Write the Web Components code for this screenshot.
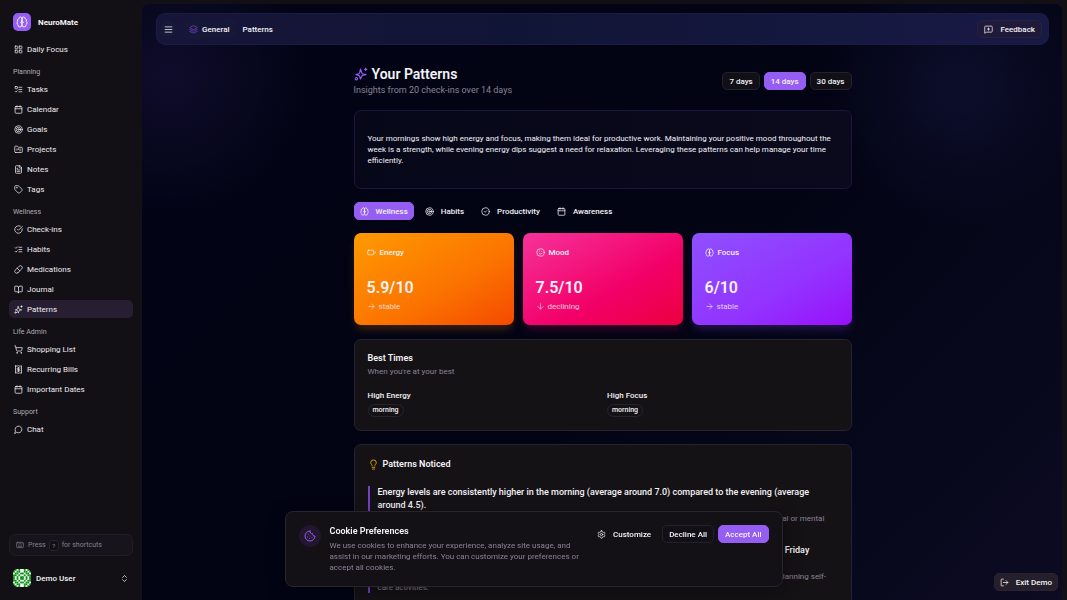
<!DOCTYPE html>
<html lang="en">
<head>
<meta charset="utf-8">
<title>NeuroMate – Your Patterns</title>
<style>
html,body{margin:0;height:100%;background:#121014}
body{font-family:Roboto,"Liberation Sans",sans-serif;font-size:8px;line-height:11px;color:#f4f2f7;--accent:#965df3;--muted:#8a8296;--line:#27222e;--card:#151216}
</style>
</head>
<body>
<nm-app></nm-app>
<script>
const ICONS = {
  grid:'<rect width="7" height="7" x="3" y="3" rx="1"/><rect width="7" height="7" x="14" y="3" rx="1"/><rect width="7" height="7" x="14" y="14" rx="1"/><rect width="7" height="7" x="3" y="14" rx="1"/>',
  todo:'<rect x="3" y="4" width="6" height="6" rx="1"/><path d="m3 17 2 2 4-4M13 6h8M13 12h8M13 18h8"/>',
  calendar:'<path d="M8 2v4M16 2v4"/><rect width="18" height="18" x="3" y="4" rx="2"/><path d="M3 10h18"/>',
  target:'<circle cx="12" cy="12" r="10"/><circle cx="12" cy="12" r="6"/><circle cx="12" cy="12" r="2"/>',
  folder:'<path d="M4 20h16a2 2 0 0 0 2-2V8a2 2 0 0 0-2-2h-7.93a2 2 0 0 1-1.66-.9l-.82-1.2A2 2 0 0 0 7.93 3H4a2 2 0 0 0-2 2v13c0 1.1.9 2 2 2ZM8 10v4M12 10v2M16 10v6"/>',
  file:'<path d="M15 2H6a2 2 0 0 0-2 2v16a2 2 0 0 0 2 2h12a2 2 0 0 0 2-2V7Z"/><path d="M14 2v4a2 2 0 0 0 2 2h4M10 9H8M16 13H8M16 17H8"/>',
  tag:'<path d="M12.586 2.586A2 2 0 0 0 11.172 2H4a2 2 0 0 0-2 2v7.172a2 2 0 0 0 .586 1.414l8.704 8.704a2.426 2.426 0 0 0 3.42 0l6.58-6.58a2.426 2.426 0 0 0 0-3.42z"/><circle cx="7.5" cy="7.5" r=".5" fill="currentColor"/>',
  check:'<path d="M21.801 10A10 10 0 1 1 17 3.335"/><path d="m9 11 3 3L22 4"/>',
  circlecheck:'<circle cx="12" cy="12" r="10"/><path d="m9 12 2 2 4-4"/>',
  list:'<path d="m3 17 2 2 4-4M3 7l2 2 4-4M13 6h8M13 12h8M13 18h8"/>',
  pill:'<path d="m10.5 20.5 10-10a4.95 4.95 0 1 0-7-7l-10 10a4.95 4.95 0 1 0 7 7ZM8.5 8.5l7 7"/>',
  book:'<path d="M12 7v14M3 18a1 1 0 0 1-1-1V4a1 1 0 0 1 1-1h5a4 4 0 0 1 4 4 4 4 0 0 1 4-4h5a1 1 0 0 1 1 1v13a1 1 0 0 1-1 1h-6a3 3 0 0 0-3 3 3 3 0 0 0-3-3z"/>',
  sparkles:'<path d="M11 20.500 9.600 15.800A2 2 0 0 0 8.200 14.400L3.500 13l4.700-1.400A2 2 0 0 0 9.600 10.200L11 3.500l2.400 6.700a2 2 0 0 0 1.400 1.400L20.500 13l-5.700 1.400a2 2 0 0 0-1.400 1.400zM20 2v4M22 4h-4"/><circle cx="4" cy="20" r="2"/>',
  cart:'<circle cx="8" cy="21" r="1"/><circle cx="19" cy="21" r="1"/><path d="M2.05 2.05h2l2.66 12.42a2 2 0 0 0 2 1.58h9.78a2 2 0 0 0 1.95-1.57l1.65-7.43H5.12"/>',
  receipt:'<path d="M4 2v20l2-1 2 1 2-1 2 1 2-1 2 1 2-1 2 1V2l-2 1-2-1-2 1-2-1-2 1-2-1-2 1Z"/><path d="M16 8h-6a2 2 0 1 0 0 4h4a2 2 0 1 1 0 4H8M12 17.5v-11"/>',
  chat:'<path d="M7.9 20A9 9 0 1 0 4 16.1L2 22Z"/>',
  keyboard:'<rect width="20" height="16" x="2" y="4" rx="2"/><path d="M6 8h.01M10 8h.01M14 8h.01M18 8h.01M8 12h.01M12 12h.01M16 12h.01M7 16h10"/>',
  updown:'<path d="m7 15 5 5 5-5M7 9l5-5 5 5"/>',
  menu:'<path d="M3 5h18M3 12h18M3 19h18"/>',
  layers:'<path d="M12.83 2.18a2 2 0 0 0-1.66 0L2.6 6.08a1 1 0 0 0 0 1.83l8.58 3.91a2 2 0 0 0 1.66 0l8.58-3.9a1 1 0 0 0 0-1.83zM2 12l9.17 4.18a2 2 0 0 0 1.66 0L22 12M2 17l9.17 4.18a2 2 0 0 0 1.66 0L22 17"/>',
  feedback:'<path d="M22 17a2 2 0 0 1-2 2H7l-5 3V5a2 2 0 0 1 2-2h16a2 2 0 0 1 2 2zM12 8v6M9 11h6"/>',
  brain:'<path d="M12 5a3 3 0 1 0-5.997.125 4 4 0 0 0-2.526 5.77 4 4 0 0 0 .556 6.588A4 4 0 1 0 12 18ZM12 5a3 3 0 1 1 5.997.125 4 4 0 0 1 2.526 5.77 4 4 0 0 1-.556 6.588A4 4 0 1 1 12 18ZM9 13a4.5 4.5 0 0 0 3-4 4.5 4.5 0 0 0 3 4"/>',
  battery:'<path d="M22 11v2"/><rect width="16" height="12" x="2" y="6" rx="2"/>',
  smile:'<circle cx="12" cy="12" r="10"/><path d="M8 14s1.500 2 4 2 4-2 4-2M9 9h.01M15 9h.01"/>',
  right:'<path d="M5 12h14M12 5l7 7-7 7"/>',
  down:'<path d="M12 5v14M19 12l-7 7-7-7"/>',
  bulb:'<path d="M15 14c.2-1 .7-1.700 1.500-2.500 1-.9 1.500-2.200 1.500-3.500A6 6 0 0 0 6 8c0 1 .2 2.200 1.500 3.500.7.7 1.300 1.500 1.500 2.500M9 18h6M10 22h4"/>',
  cookie:'<path d="M12 2a10 10 0 1 0 10 10 4 4 0 0 1-5-5 4 4 0 0 1-5-5M8.500 8.500v.01M16 15.500v.01M12 12v.01M11 17v.01M7 14v.01"/>',
  settings:'<path d="M12.220 2h-.440a2 2 0 0 0-2 2v.180a2 2 0 0 1-1 1.730l-.430.250a2 2 0 0 1-2 0l-.150-.080a2 2 0 0 0-2.730.730l-.220.380a2 2 0 0 0 .730 2.730l.150.100a2 2 0 0 1 1 1.720v.510a2 2 0 0 1-1 1.740l-.150.090a2 2 0 0 0-.730 2.730l.220.380a2 2 0 0 0 2.730.730l.150-.080a2 2 0 0 1 2 0l.430.250a2 2 0 0 1 1 1.730V20a2 2 0 0 0 2 2h.440a2 2 0 0 0 2-2v-.180a2 2 0 0 1 1-1.730l.430-.250a2 2 0 0 1 2 0l.150.080a2 2 0 0 0 2.730-.730l.220-.390a2 2 0 0 0-.730-2.730l-.150-.080a2 2 0 0 1-1-1.740v-.500a2 2 0 0 1 1-1.740l.150-.090a2 2 0 0 0 .730-2.730l-.220-.380a2 2 0 0 0-2.730-.730l-.150.080a2 2 0 0 1-2 0l-.430-.250a2 2 0 0 1-1-1.730V4a2 2 0 0 0-2-2z"/><circle cx="12" cy="12" r="3"/>',
  logout:'<path d="M9 21H5a2 2 0 0 1-2-2V5a2 2 0 0 1 2-2h4M16 17l5-5-5-5M21 12H9"/>'
};
const define = (name, markup, setup) => customElements.define(name, class extends HTMLElement {
  constructor(){
    super();
    const t = document.createElement('template');
    t.innerHTML = '<style>*{box-sizing:border-box}h1,h2,h3,p{margin:0}button,a{font:inherit;color:inherit;text-decoration:none}button{margin:0;cursor:pointer}:host{display:block;box-sizing:border-box}</style>' + markup;
    this.attachShadow({mode:'open'}).append(t.content.cloneNode(true));
  }
  connectedCallback(){ if (setup) setup(this, this.shadowRoot); }
});

define('nm-icon', `<style>:host{display:block;flex:none;width:9px;height:9px}svg{display:block;width:100%;height:100%}</style><svg viewBox="0 0 24 24" fill="none" stroke="currentColor" stroke-width="2" stroke-linecap="round" stroke-linejoin="round" aria-hidden="true"></svg>`,
  (el, r) => { r.querySelector('svg').innerHTML = ICONS[el.getAttribute('name')]; });

define('nm-button', `<style>
:host{display:block;flex:none}
button{display:flex;align-items:center;justify-content:center;gap:7px;width:100%;height:18px;padding:0 var(--pad,5px);border:1px solid transparent;border-radius:5px;background:none;font-weight:500;white-space:nowrap}
:host([kind=outline]) button{background:#121017;border-color:#25202b}
:host([kind=primary]) button{background:var(--accent);border-color:var(--accent)}
:host([kind=soft]) button{background:#251f2c;border-color:#2a2432}
:host([kind=glass]) button{background:#1f1a3a;border-color:#262142}
</style><button type="button"><slot name="icon"></slot><slot></slot></button>`);

define('nm-nav-item', `<style>
a{display:flex;align-items:center;gap:4px;height:18px;padding:0 5px;border-radius:5px;color:#eeebf2}
:host([active]) a{background:#271f31}
</style><a href="#"><nm-icon></nm-icon><slot></slot></a>`,
  (el, r) => { const i = r.querySelector('nm-icon'); const n = document.createElement('nm-icon'); n.setAttribute('name', el.getAttribute('icon')); i.replaceWith(n);
    if (el.hasAttribute('active')) r.querySelector('a').setAttribute('aria-current','page'); });

define('nm-nav-group', `<style>
:host{display:flex;flex-direction:column;gap:2px;padding-top:4px}
h2{height:16px;line-height:20px;padding-left:4px;font-size:7px;font-weight:400;color:#b1adb6}
:host(:not([label])) h2{display:none}
</style><h2></h2><slot></slot>`, (el, r) => { r.querySelector('h2').textContent = el.getAttribute('label') || ''; });

define('nm-avatar', `<style>:host{flex:none;width:18px;height:18px}svg{display:block;border-radius:5px}</style>
<svg width="18" height="18" viewBox="0 0 20 20" role="img" aria-label="Avatar"><rect width="20" height="20" fill="#f4fff4"/><g></g></svg>`,
  (el, r) => {
    const rows = ['11010','10110','01101','11010','10101','10101','11010','01101','10110','11010'];
    let s = '';
    rows.forEach((row, y) => (row + [...row].reverse().join('')).split('').forEach((c, x) => {
      if (c === '1') s += `<rect x="${x * 2}" y="${y * 2}" width="2" height="2"/>`;
    }));
    const g = r.querySelector('g'); g.setAttribute('fill', '#0d8f18'); g.innerHTML = s;
  });

define('nm-sidebar', `<style>
:host{display:flex;flex-direction:column;width:142px;flex:none;padding:13px 9px;background:#121014}
.brand{display:flex;align-items:center;gap:7px;padding-left:4px;font-weight:700;height:18px}
.logo{display:grid;place-items:center;width:18px;height:18px;border-radius:5px;background:var(--accent)}
.logo nm-icon{width:12px;height:12px}
nav{padding-top:5px;flex:1}
.keys{display:flex;align-items:center;height:22px;padding:0 6px;gap:4px;border:1px solid #211d27;border-radius:6px;background:#17141b;color:#858091;font-size:7px}
.keys span{display:flex;align-items:center;gap:3px}
kbd{display:grid;place-items:center;width:10px;height:11px;border:1px solid #27222e;border-radius:3px;background:#121014;font:500 6px Roboto,sans-serif}
.keys nm-icon{width:8px;height:8px}
.user{display:flex;align-items:center;gap:5px;width:100%;height:18px;margin-top:13px;padding:0 4px;border:0;background:none;text-align:left;font-weight:500}
.user span{flex:1}
</style>
<div class="brand"><span class="logo"><nm-icon name="brain"></nm-icon></span>NeuroMate</div>
<nav>
<nm-nav-group><nm-nav-item icon="grid">Daily Focus</nm-nav-item></nm-nav-group>
<nm-nav-group label="Planning"><nm-nav-item icon="todo">Tasks</nm-nav-item><nm-nav-item icon="calendar">Calendar</nm-nav-item><nm-nav-item icon="target">Goals</nm-nav-item><nm-nav-item icon="folder">Projects</nm-nav-item><nm-nav-item icon="file">Notes</nm-nav-item><nm-nav-item icon="tag">Tags</nm-nav-item></nm-nav-group>
<nm-nav-group label="Wellness"><nm-nav-item icon="check">Check-ins</nm-nav-item><nm-nav-item icon="list">Habits</nm-nav-item><nm-nav-item icon="pill">Medications</nm-nav-item><nm-nav-item icon="book">Journal</nm-nav-item><nm-nav-item icon="sparkles" active>Patterns</nm-nav-item></nm-nav-group>
<nm-nav-group label="Life Admin"><nm-nav-item icon="cart">Shopping List</nm-nav-item><nm-nav-item icon="receipt">Recurring Bills</nm-nav-item><nm-nav-item icon="calendar">Important Dates</nm-nav-item></nm-nav-group>
<nm-nav-group label="Support"><nm-nav-item icon="chat">Chat</nm-nav-item></nm-nav-group>
</nav>
<div class="keys"><nm-icon name="keyboard"></nm-icon><span>Press <kbd>?</kbd> for shortcuts</span></div>
<button class="user" type="button"><nm-avatar></nm-avatar><span>Demo User</span><nm-icon name="updown"></nm-icon></button>`);

define('nm-topbar', `<style>
:host{display:flex;align-items:center;height:32px;padding:0 3px;border:1px solid #1c1c42;border-radius:9px;background:linear-gradient(90deg,#17153a,#111535 40%,#181a46)}
.menu{display:grid;place-items:center;width:16px;height:16px;padding:0;border:0;border-radius:5px;background:#161a38}
.crumb{display:flex;align-items:center;gap:4px;height:20px;margin:0 7px;padding:0 6px;border-radius:5px;background:#161837;font-weight:500}
.crumb nm-icon{color:#7343c6}
nav{display:flex;align-items:center;flex:1;font-weight:500}
nm-button{margin-right:3px;--pad:6px}
</style>
<button class="menu" type="button" aria-label="Menu"><nm-icon name="menu"></nm-icon></button>
<nav><a class="crumb" href="#"><nm-icon name="layers"></nm-icon>General</a><a href="#">Patterns</a></nav>
<nm-button kind="glass"><nm-icon slot="icon" name="feedback"></nm-icon>Feedback</nm-button>`);

define('nm-card', `<style>
:host{padding:13px;border:1px solid var(--line);border-radius:7px;background:var(--card)}
:host([tone=insight]){padding:22px 13px;background:linear-gradient(90deg,#07071a,#0b0a1d);border-color:#1c1540}
</style><slot></slot>`);

define('nm-stat', `<style>
:host{height:92px;padding:13px;border-radius:7px;background:linear-gradient(to bottom right,var(--from),var(--mid) 60%,var(--to));box-shadow:0 6px 9px -2px var(--glow)}
h3{display:flex;align-items:center;gap:4px;height:13px;font-size:8px;font-weight:500}
strong{display:block;margin-top:18px;font-size:16px;line-height:22px;font-weight:600}
p{display:flex;align-items:center;gap:2px;opacity:.8;margin-top:2px;line-height:11px}
</style><h3><slot name="icon"></slot><slot name="title"></slot></h3><strong><slot></slot></strong><p><slot name="trend"></slot></p>`);

define('nm-time', `<style>
h3{font-size:8px;line-height:11px;font-weight:500}
div{width:fit-content;margin-top:3px;height:13px;padding:0 4px;line-height:11px;border:1px solid var(--line);border-radius:7px;font-size:7px;font-weight:500}
</style><h3><slot name="title"></slot></h3><div><slot></slot></div>`);

define('nm-pattern', `<style>
:host{padding-left:8px;border-left:2px solid #7343c6}
h3{font-size:9px;line-height:13px;font-weight:500;margin-bottom:1px}
p{color:var(--muted);line-height:11px;padding-right:8px}
</style><h3><slot name="title"></slot></h3><p><slot></slot></p>`);

define('nm-patterns-page', `<style>
:host{width:498px;max-width:100%;margin:0 auto}
header{display:flex;align-items:center;justify-content:space-between;height:32px}
h1{display:flex;align-items:center;gap:4px;font-size:14px;line-height:18px;font-weight:600}
h1 nm-icon{width:14px;height:14px;color:var(--accent)}
header p{font-size:9px;line-height:14px;color:var(--muted)}
.range{display:flex;gap:4px;--pad:6px}
.tabs{display:flex;gap:5px;margin:13px 0}
nm-card[tone]{margin-top:13px}
.stats{display:grid;grid-template-columns:repeat(3,1fr);gap:9px}
.trend{display:flex;align-items:center;gap:3px}
.stats+nm-card{margin-top:14px}
nm-card+nm-card{margin-top:13px}
h2{font-size:9px;line-height:11px;font-weight:600}
.sub{color:var(--muted);margin-top:2px;line-height:12px}
.times{display:grid;grid-template-columns:1fr 1fr;gap:9px;margin-top:12px}
.noticed{display:flex;align-items:center;gap:4px;line-height:13px}
.noticed nm-icon{width:11px;height:11px;color:#eaa908}
.list{display:grid;gap:9px;margin-top:15px}
</style>
<header><div><h1><nm-icon name="sparkles"></nm-icon>Your Patterns</h1><p>Insights from 20 check-ins over 14 days</p></div>
<div class="range"><nm-button kind="outline">7 days</nm-button><nm-button kind="primary">14 days</nm-button><nm-button kind="outline">30 days</nm-button></div></header>
<nm-card tone="insight"><p>Your mornings show high energy and focus, making them ideal for productive work. Maintaining your positive mood throughout the week is a strength, while evening energy dips suggest a need for relaxation. Leveraging these patterns can help manage your time efficiently.</p></nm-card>
<div class="tabs"><nm-button kind="primary"><nm-icon slot="icon" name="brain"></nm-icon>Wellness</nm-button><nm-button><nm-icon slot="icon" name="target"></nm-icon>Habits</nm-button><nm-button><nm-icon slot="icon" name="circlecheck"></nm-icon>Productivity</nm-button><nm-button><nm-icon slot="icon" name="calendar"></nm-icon>Awareness</nm-button></div>
<div class="stats">
<nm-stat style="--from:#ff9a00;--mid:#fb7200;--to:#f54900;--glow:#ff7a0040"><nm-icon slot="icon" name="battery"></nm-icon><span slot="title">Energy</span>5.9/10<span slot="trend" class="trend"><nm-icon name="right"></nm-icon>stable</span></nm-stat>
<nm-stat style="--from:#f6339a;--mid:#f20068;--to:#ec003f;--glow:#f6006840"><nm-icon slot="icon" name="smile"></nm-icon><span slot="title">Mood</span>7.5/10<span slot="trend" class="trend"><nm-icon name="down"></nm-icon>declining</span></nm-stat>
<nm-stat style="--from:#8e51ff;--mid:#9333ff;--to:#9810fa;--glow:#8e40ff40"><nm-icon slot="icon" name="brain"></nm-icon><span slot="title">Focus</span>6/10<span slot="trend" class="trend"><nm-icon name="right"></nm-icon>stable</span></nm-stat>
</div>
<nm-card><h2>Best Times</h2><p class="sub">When you're at your best</p><div class="times"><nm-time><span slot="title">High Energy</span>morning</nm-time><nm-time><span slot="title">High Focus</span>morning</nm-time></div></nm-card>
<nm-card><h2 class="noticed"><nm-icon name="bulb"></nm-icon>Patterns Noticed</h2><div class="list">
<nm-pattern><span slot="title">Energy levels are consistently higher in the morning (average around 7.0) compared to the evening (average around 4.5).</span>Consider scheduling demanding tasks and important meetings earlier in the day, when you often have more physical or mental energy.</nm-pattern>
<nm-pattern><span slot="title">Mood ratings stay positive for most of the week, with somewhat lower scores than usual recorded on Friday afternoons.</span>Use the end of the week as an opportunity to rest and recharge, for example with a quiet, calm evening, a walk, or planning self-care activities.</nm-pattern>
</div></nm-card>`);

define('nm-cookie-banner', `<style>
:host{position:fixed;left:50%;bottom:13px;transform:translateX(-50%);display:flex;gap:9px;width:498px;max-width:calc(100% - 26px);padding:13px;border:1px solid #29232f;border-radius:8px;background:#141116;box-shadow:0 4px 18px #0006}
.badge{display:grid;place-items:center;flex:none;width:22px;height:22px;border-radius:50%;background:#22172f;color:var(--accent)}
.badge nm-icon{width:12px;height:12px}
.text{flex:1;max-width:252px}
h2{font-size:9px;line-height:13px;font-weight:600}
p{color:var(--muted);margin-top:2px}
.actions{display:flex;gap:4px;margin-left:auto;align-self:flex-start;--pad:6px}
</style><span class="badge"><nm-icon name="cookie"></nm-icon></span>
<div class="text"><h2>Cookie Preferences</h2><p>We use cookies to enhance your experience, analyze site usage, and assist in our marketing efforts. You can customize your preferences or accept all cookies.</p></div>
<div class="actions"><nm-button><nm-icon slot="icon" name="settings"></nm-icon>Customize</nm-button><nm-button kind="outline">Decline All</nm-button><nm-button kind="primary">Accept All</nm-button></div>`);

define('nm-app', `<style>
:host{display:flex;height:100vh;overflow:hidden}
main{flex:1;min-width:0;margin:4px 5px 0 0;padding:9px 13px 0 14px;overflow:hidden;border-radius:7px 7px 0 0;background:radial-gradient(circle at 3% 12%,#0f0c2b,#0f0c2b00 140px),radial-gradient(circle at 89% 14%,#0d0e2b,#0d0e2b00 140px),linear-gradient(135deg,#020415 0%,#020414 55%,#0c0b22 100%)}
nm-patterns-page{margin-top:20px}
.exit{position:fixed;right:9px;bottom:9px}
</style><nm-sidebar></nm-sidebar>
<main><nm-topbar></nm-topbar><nm-patterns-page></nm-patterns-page></main>
<nm-cookie-banner></nm-cookie-banner>
<nm-button class="exit" kind="soft"><nm-icon slot="icon" name="logout"></nm-icon>Exit Demo</nm-button>`);
</script>
</body>
</html>
